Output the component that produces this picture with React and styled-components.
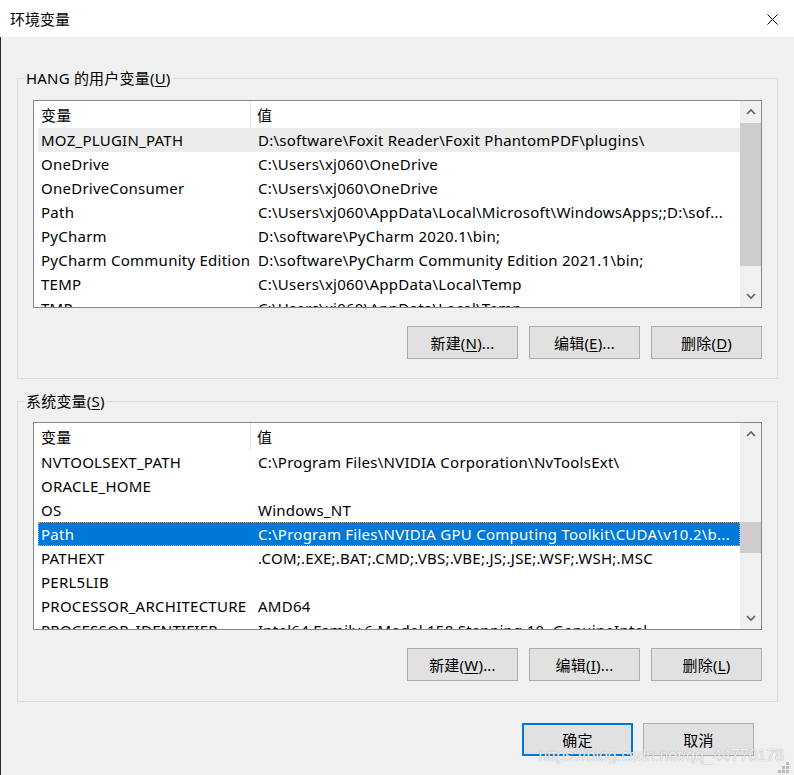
import React from "react";
import styled, { createGlobalStyle } from "styled-components";

const GlobalStyle = createGlobalStyle`
  html, body {
    margin: 0;
    padding: 0;
    background: #f0f0f0;
  }
  * {
    box-sizing: border-box;
  }
`;

const FONT = `"Noto Sans", "Noto Sans CJK SC", sans-serif`;

const Window = styled.div`
  position: relative;
  width: 794px;
  height: 775px;
  display: flex;
  flex-direction: column;
  background: #f0f0f0;
  font-family: ${FONT};
  font-size: 15px;
  color: #000;
  overflow: hidden;
`;

const TitleBar = styled.div`
  height: 37px;
  flex: none;
  background: #ffffff;
  display: flex;
  align-items: center;
  justify-content: space-between;
  padding-left: 10px;
  padding-right: 16px;
`;

const Title = styled.span`
  font-size: 15px;
  line-height: 20px;
`;

const CloseButton = styled.span`
  display: flex;
  width: 11px;
  height: 11px;
  margin-top: 1px;
`;

const Body = styled.div`
  flex: 1;
  display: flex;
  flex-direction: column;
  border-left: 1px solid #2b2b2b;
  padding: 31px 16px 0 16px;
`;

const GroupBox = styled.fieldset`
  margin: ${(p) => (p.$first ? "0" : "12px")} 0 0 0;
  padding: ${(p) => (p.$first ? "12px" : "11px")} 15px ${(p) => (p.$first ? "19px" : "20px")} 15px;
  border: 1px solid #dcdcdc;
  min-width: 0;
`;

const GroupLabel = styled.legend`
  margin-left: -9px;
  padding: 0 2px;
  font-size: 15px;
  line-height: 20px;
  height: 20px;
  letter-spacing: 0.2px;
`;

const Key = styled.span`
  text-decoration: underline;
  text-underline-offset: 2px;
`;

const ListView = styled.div`
  height: 208px;
  border: 1px solid #828790;
  background: #ffffff;
  display: flex;
`;

const ListContent = styled.div`
  flex: 1;
  min-width: 0;
  overflow: hidden;
  padding-left: 4px;
  letter-spacing: 0.25px;
`;

const HeaderRow = styled.div`
  height: 27px;
  display: flex;
  align-items: stretch;
`;

const HeaderCell = styled.div`
  display: flex;
  align-items: center;
  width: ${(p) => p.$width || "auto"};
  flex: ${(p) => (p.$width ? "none" : "1")};
  padding-left: ${(p) => p.$pad}px;
  border-right: ${(p) => (p.$sep ? "1px solid #e5e5e5" : "none")};
  margin-top: -1px;
`;

const Row = styled.div`
  position: relative;
  height: 24px;
  display: flex;
  align-items: center;
  white-space: nowrap;
  background: ${(p) =>
    p.$selected ? "#0078d7" : p.$inactive ? "#ececec" : "transparent"};
  color: ${(p) => (p.$selected ? "#ffffff" : "#000000")};
  outline: ${(p) => (p.$selected ? "1px dotted #f7a04b" : "none")};
  outline-offset: -1px;
`;

const NameCell = styled.span`
  width: 220px;
  flex: none;
  padding-left: 3px;
  overflow: hidden;
`;

const ValueCell = styled.span`
  flex: 1;
  min-width: 0;
  overflow: hidden;
`;

const ScrollBar = styled.div`
  width: 21px;
  flex: none;
  background: #f0f0f0;
  display: flex;
  flex-direction: column;
`;

const ScrollArrow = styled.div`
  height: 21px;
  flex: none;
  display: flex;
  align-items: center;
  justify-content: center;
`;

const ScrollTrack = styled.div`
  flex: 1;
`;

const ScrollThumb = styled.div`
  margin-top: ${(p) => p.$top}px;
  height: ${(p) => p.$height}px;
  background: #cdcdcd;
`;

const ButtonRow = styled.div`
  display: flex;
  justify-content: flex-end;
  gap: 11px;
  margin-top: 18px;
`;

const Button = styled.button`
  width: 111px;
  height: 33px;
  padding: 0;
  background: #e1e1e1;
  border: ${(p) => (p.$default ? "2px solid #0078d7" : "1px solid #adadad")};
  font-family: ${FONT};
  font-size: 15px;
  letter-spacing: 0.2px;
  color: #000;
  display: flex;
  align-items: center;
  justify-content: center;
`;

const Footer = styled.div`
  display: flex;
  justify-content: flex-end;
  gap: 10px;
  margin-top: 21px;
  padding-right: 24px;
`;

const Watermark = styled.div`
  position: absolute;
  right: 10px;
  top: 746px;
  font-family: "Liberation Sans", Arial, sans-serif;
  font-size: 16px;
  line-height: 20px;
  color: rgba(255, 255, 255, 0.85);
  text-shadow: 0 0 1px rgba(120, 120, 120, 0.8);
  pointer-events: none;
  white-space: nowrap;
`;

const Grip = styled.svg`
  position: absolute;
  right: 4px;
  bottom: 1px;
`;

const Chevron = ({ up }) => (
  <svg width="10" height="7" viewBox="0 0 10 7">
    <path
      d={up ? "M1 6 L5 2 L9 6" : "M1 1 L5 5 L9 1"}
      fill="none"
      stroke="#606060"
      strokeWidth="1.6"
    />
  </svg>
);

const userVars = [
  ["MOZ_PLUGIN_PATH", "D:\\software\\Foxit Reader\\Foxit PhantomPDF\\plugins\\"],
  ["OneDrive", "C:\\Users\\xj060\\OneDrive"],
  ["OneDriveConsumer", "C:\\Users\\xj060\\OneDrive"],
  ["Path", "C:\\Users\\xj060\\AppData\\Local\\Microsoft\\WindowsApps;;D:\\sof..."],
  ["PyCharm", "D:\\software\\PyCharm 2020.1\\bin;"],
  ["PyCharm Community Edition", "D:\\software\\PyCharm Community Edition 2021.1\\bin;"],
  ["TEMP", "C:\\Users\\xj060\\AppData\\Local\\Temp"],
  ["TMP", "C:\\Users\\xj060\\AppData\\Local\\Temp"],
];

const sysVars = [
  ["NVTOOLSEXT_PATH", "C:\\Program Files\\NVIDIA Corporation\\NvToolsExt\\"],
  ["ORACLE_HOME", ""],
  ["OS", "Windows_NT"],
  ["Path", "C:\\Program Files\\NVIDIA GPU Computing Toolkit\\CUDA\\v10.2\\b..."],
  ["PATHEXT", ".COM;.EXE;.BAT;.CMD;.VBS;.VBE;.JS;.JSE;.WSF;.WSH;.MSC"],
  ["PERL5LIB", ""],
  ["PROCESSOR_ARCHITECTURE", "AMD64"],
  ["PROCESSOR_IDENTIFIER", "Intel64 Family 6 Model 158 Stepping 10, GenuineIntel"],
];

const VarList = ({ rows, inactive, selected, thumbTop, thumbHeight }) => (
  <ListView>
    <ListContent>
      <HeaderRow>
        <HeaderCell $width="213px" $pad={3} $sep>变量</HeaderCell>
        <HeaderCell $pad={6}>值</HeaderCell>
      </HeaderRow>
      {rows.map(([name, value], i) => (
        <Row key={name + i} $inactive={i === inactive} $selected={i === selected}>
          <NameCell>{name}</NameCell>
          <ValueCell>{value}</ValueCell>
        </Row>
      ))}
    </ListContent>
    <ScrollBar>
      <ScrollArrow>
        <Chevron up />
      </ScrollArrow>
      <ScrollTrack>
        <ScrollThumb $top={thumbTop} $height={thumbHeight} />
      </ScrollTrack>
      <ScrollArrow>
        <Chevron />
      </ScrollArrow>
    </ScrollBar>
  </ListView>
);

const App = () => {
  return (
    <>
      <GlobalStyle />
      <Window>
        <TitleBar>
          <Title>环境变量</Title>
          <CloseButton>
            <svg width="11" height="11" viewBox="0 0 11 11">
              <path d="M0.5 0.5 L10.5 10.5 M10.5 0.5 L0.5 10.5" stroke="#000" strokeWidth="1" />
            </svg>
          </CloseButton>
        </TitleBar>
        <Body>
          <GroupBox $first>
            <GroupLabel>
              HANG 的用户变量(<Key>U</Key>)
            </GroupLabel>
            <VarList rows={userVars} inactive={0} thumbTop={1} thumbHeight={143} />
            <ButtonRow>
              <Button>新建(<Key>N</Key>)...</Button>
              <Button>编辑(<Key>E</Key>)...</Button>
              <Button>删除(<Key>D</Key>)</Button>
            </ButtonRow>
          </GroupBox>
          <GroupBox>
            <GroupLabel>
              系统变量(<Key>S</Key>)
            </GroupLabel>
            <VarList rows={sysVars} selected={3} thumbTop={78} thumbHeight={31} />
            <ButtonRow>
              <Button>新建(<Key>W</Key>)...</Button>
              <Button>编辑(<Key>I</Key>)...</Button>
              <Button>删除(<Key>L</Key>)</Button>
            </ButtonRow>
          </GroupBox>
          <Footer>
            <Button $default>确定</Button>
            <Button>取消</Button>
          </Footer>
        </Body>
        <Watermark>https://blog.csdn.net/qq_44770178</Watermark>
        <Grip width="12" height="12" viewBox="0 0 12 12">
          {[
            [8, 0], [8, 4], [4, 4], [8, 8], [4, 8], [0, 8],
          ].map(([x, y]) => (
            <rect key={`${x}-${y}`} x={x} y={y} width="3" height="3" fill="#bcbcbc" />
          ))}
        </Grip>
      </Window>
    </>
  );
};

export default App;
